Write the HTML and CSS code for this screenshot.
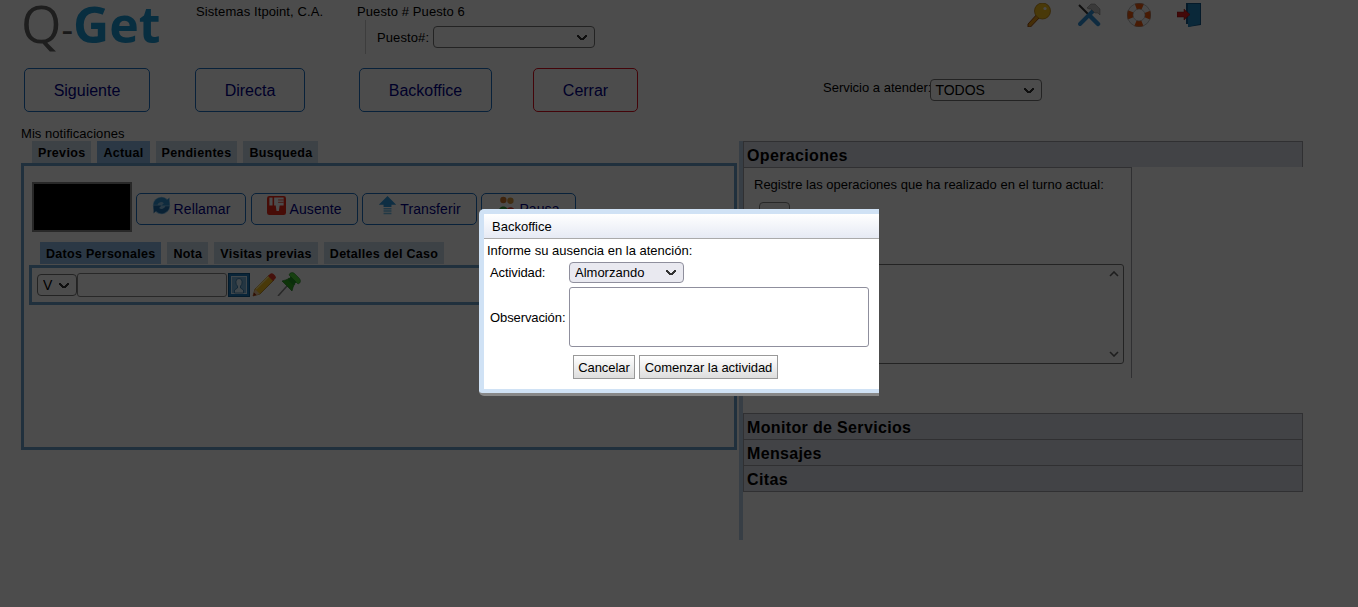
FILE: index.html
```html
<!DOCTYPE html>
<html lang="es">
<head>
    <meta charset="UTF-8">
    <meta name="viewport" content="width=device-width, initial-scale=1.0">
    <title>Q-Get</title>
    <link rel="stylesheet" href="styles.css">
</head>
<body>
    <header class="top">
        <div class="logo"><span class="logo-q">Q</span><span class="logo-dash">-</span><span class="logo-get">Get</span></div>
        <div class="company">Sistemas Itpoint, C.A.</div>
        <div class="station">
            <div>Puesto # Puesto 6</div>
            <div class="station-pick">
                <label>Puesto#:</label>
                <select class="station-select"><option></option></select>
            </div>
        </div>
        <nav class="top-icons">
            <svg class="top-icon" viewBox="0 0 24 24"><path d="M1 21l11-12 3 3L3.500 24H1z" fill="#e89a18" stroke="#9a4a10" stroke-width="1"/><circle cx="15.500" cy="8" r="8" fill="#f4c020" stroke="#b88010" stroke-width=".8"/><circle cx="18" cy="5.500" r="1.600" fill="#f4f4f4"/></svg>
            <svg class="top-icon" viewBox="0 0 24 24"><path d="M2 2l11 11" stroke="#333" stroke-width="2"/><path d="M13 13l8 8" stroke="#2f90d8" stroke-width="4.500" stroke-linecap="round"/><path d="M3 21L16 8" stroke="#2f90d8" stroke-width="4" stroke-linecap="round"/><path d="M10 5l4-4h4l5 5v6l-2-2-3 0-4-4-2 0z" fill="#c4c4c4" stroke="#777" stroke-width=".5"/></svg>
            <svg class="top-icon" viewBox="0 0 24 24"><circle cx="12" cy="12" r="9" fill="none" stroke="#f4f4f4" stroke-width="6"/><circle cx="12" cy="12" r="9" fill="none" stroke="#f05a10" stroke-width="6" stroke-dasharray="7.070 7.070" stroke-dashoffset="3.535"/><circle cx="12" cy="12" r="11.700" fill="none" stroke="#999" stroke-width=".6"/><circle cx="12" cy="12" r="6" fill="none" stroke="#999" stroke-width=".6"/></svg>
            <svg class="top-icon" viewBox="0 0 24 24"><path d="M9 0h15v22l-13 2V21H9z" fill="#12598a"/><path d="M11 1h12v20l-12 3z" fill="#2486c0"/><path d="M0 9h7V6l6 5.500-6 5.500v-3H0z" fill="#e02020" stroke="#801010" stroke-width=".5"/></svg>
        </nav>
    </header>

    <section class="actions">
        <button class="action-btn btn-next">Siguiente</button>
        <button class="action-btn btn-direct">Directa</button>
        <button class="action-btn btn-back">Backoffice</button>
        <button class="action-btn btn-close">Cerrar</button>
        <div class="service">
            <label>Servicio a atender:</label>
            <select class="service-select"><option>TODOS</option></select>
        </div>
    </section>

    <main class="work">
        <section class="left">
            <div class="notes-label">Mis notificaciones</div>
            <ul class="tabs tabs-main">
                <li>Previos</li>
                <li class="active">Actual</li>
                <li>Pendientes</li>
                <li>Busqueda</li>
            </ul>
            <div class="tab-panel">
                <div class="call-row">
                    <div class="ticket"></div>
                    <div class="call-btns">
                        <button class="call-btn call-redial">
                            <svg class="call-icon" viewBox="0 0 24 24"><circle cx="12" cy="12" r="11" fill="#8cc6ec"/><path d="M2 11a10 10 0 0 1 17-6l3-3v10H12l3-3a5 5 0 0 0-8 2z" fill="#2f8fd0"/><path d="M22 13a10 10 0 0 1-17 6l-3 3V12h10l-3 3a5 5 0 0 0 8-2z" fill="#1f70b0"/></svg>
                            Rellamar
                        </button>
                        <button class="call-btn call-away">
                            <svg class="call-icon" viewBox="0 0 24 24"><rect width="24" height="24" rx="3" fill="#ee2a18"/><path d="M9 2h12v10h-5l-1 7h-3l-1-7H9z" fill="#fff"/><path d="M3 2h4v10H3z" fill="#fff"/><path d="M14 5h7M14 8h7" stroke="#ee2a18"/></svg>
                            Ausente
                        </button>
                        <button class="call-btn call-transfer">
                            <svg class="call-icon" viewBox="0 0 24 24"><path d="M12 0l11 11h-6v3H7v-3H1z" fill="#2f9ae0"/><path d="M7 15h10v2H7zM7 18h10v2H7zM7 21h10v2H7z" fill="#6fbce8"/></svg>
                            Transferir
                        </button>
                        <button class="call-btn call-pause">
                            <svg class="call-icon" viewBox="0 0 24 24"><circle cx="8" cy="5" r="4" fill="#d07a30"/><circle cx="17" cy="6" r="4" fill="#d89a40"/><path d="M2 20c0-9 12-9 12 0z" fill="#3aa040"/><path d="M11 21c0-9 12-9 12 0z" fill="#e04030"/></svg>
                            Pausa
                        </button>
                    </div>
                </div>
                <ul class="tabs tabs-inner">
                    <li class="active">Datos Personales</li>
                    <li>Nota</li>
                    <li>Visitas previas</li>
                    <li>Detalles del Caso</li>
                </ul>
                <div class="inner-panel">
                    <select class="doc-type"><option>V</option></select>
                    <input class="doc-number" type="text">
                    <svg class="photo-btn" viewBox="0 0 22 24"><rect x=".5" y=".5" width="21" height="23" fill="#1f7cc0" stroke="#0f5a90"/><rect x="3.500" y="3.500" width="15" height="17" fill="#78b4dc" stroke="#d8eefa"/><path d="M6.500 20v-3l3-2v-2a4 4 0 0 1-1.500-3V8.500a3 3 0 0 1 6 0V10a4 4 0 0 1-1.500 3v2l3 2v3z" fill="#d8eefa" stroke="#1f6aa0" stroke-width=".7"/></svg>
                    <svg class="tool-icon pencil-icon" viewBox="0 0 24 24"><path d="M1 23l2-7L17 2l5 5L8 21z" fill="#f4c020" stroke="#a06a10" stroke-width=".7"/><path d="M4 16L18 2" stroke="#ffe88a" stroke-width="1.500"/><path d="M16 3l2-2a2.500 2.500 0 0 1 3.500 0l1.500 1.500a2.500 2.500 0 0 1 0 3.500l-2 2z" fill="#e83a28"/><path d="M1 23l2-7 5 5z" fill="#f0c898"/><path d="M1 23l1-3.500 2.500 2.500z" fill="#a02a10"/></svg>
                    <svg class="tool-icon pin-icon" viewBox="0 0 24 24"><path d="M1 24l9-10" stroke="#888" stroke-width="1.600"/><path d="M5 9c3-1 5-1 7-3l6 6c-2 2-2 4-3 7z" fill="#2fb020" stroke="#15701a" stroke-width=".6"/><path d="M11 8l3-4 6 6-4 3z" fill="#1f9a20"/><path d="M12 3c1-3 4-3 6-1l4 4c2 2 2 5-1 6z" fill="#4fd838" stroke="#15701a" stroke-width=".5"/></svg>
                </div>
            </div>
        </section>

        <div class="splitter"></div>

        <section class="right">
            <h3 class="acc-head acc-open">Operaciones</h3>
            <div class="acc-body">
                <p class="acc-text">Registre las operaciones que ha realizado en el turno actual:</p>
                <button class="small-btn"></button>
                <div class="ops-list">
                    <svg class="arrow" viewBox="0 0 10 6"><path d="M1 5l4-4 4 4" fill="none" stroke="#666" stroke-width="1.600"/></svg>
                    <svg class="arrow arrow-down" viewBox="0 0 10 6"><path d="M1 1l4 4 4-4" fill="none" stroke="#666" stroke-width="1.600"/></svg>
                </div>
            </div>
            <div class="acc-rest">
                <h3 class="acc-head">Monitor de Servicios</h3>
                <h3 class="acc-head">Mensajes</h3>
                <h3 class="acc-head">Citas</h3>
            </div>
        </section>
    </main>

    <div class="overlay"></div>

    <div class="dialog">
        <div class="dialog-title">Backoffice</div>
        <div class="dialog-body">
            <p class="dialog-intro">Informe su ausencia en la atención:</p>
            <div class="dialog-form">
                <label>Actividad:</label>
                <select class="activity"><option>Almorzando</option></select>
                <label>Observación:</label>
                <textarea class="observation"></textarea>
            </div>
            <div class="dialog-btns">
                <button class="dialog-btn btn-cancel">Cancelar</button>
                <button class="dialog-btn btn-start">Comenzar la actividad</button>
            </div>
        </div>
    </div>
</body>
</html>
```
FILE: styles.css
```css
* {
    box-sizing: border-box;
}

body {
    font-family: "Liberation Sans", Arial, sans-serif;
    font-size: 12px;
    margin: 0;
    height: 607px;
    overflow: hidden;
    background: #fff;
    color: #000;
}

/* the chevron is two small diagonal stripes */
select {
    appearance: none;
    padding: 0 0 0 4px;
    border: 1px solid #767676;
    border-radius: 4px;
    background-color: #fff;
    background-image: linear-gradient(45deg, transparent 37%, #333 37%, #333 63%, transparent 63%),
        linear-gradient(-45deg, transparent 37%, #333 37%, #333 63%, transparent 63%);
    background-position: right 12px center, right 7px center;
    background-size: 5px 5px;
    background-repeat: no-repeat;
    font-family: inherit;
}

/* header */
.top {
    display: flex;
    height: 68px;
    padding-left: 21px;
}

.logo {
    width: 175px;
    font-family: "Open Sans", sans-serif;
    font-size: 52px;
    line-height: 46px;
    white-space: nowrap;
    color: #666;
}

.logo-dash {
    font-size: 36px;
    color: #555;
}

.logo-get {
    font-size: 50px;
    font-weight: 700;
    color: #1d9ad6;
}

.company {
    width: 161px;
    padding-top: 4px;
    font-size: 13px;
    letter-spacing: .1px;
}

.station {
    padding-top: 4px;
    font-size: 13px;
    letter-spacing: .1px;
}

.station-pick {
    display: flex;
    align-items: center;
    gap: 4px;
    margin: 1px 0 0 8px;
    padding: 6px 0 6px 11px;
    border-left: 1px solid #ccc;
}

.station-select {
    width: 162px;
    height: 22px;
}

.top-icons {
    display: flex;
    gap: 26px;
    margin-left: 432px;
    padding-top: 3px;
}

.top-icon {
    width: 24px;
    height: 24px;
}

/* big action buttons */
.actions {
    display: flex;
    align-items: flex-start;
    height: 58px;
    padding-left: 24px;
}

.action-btn {
    height: 44px;
    padding-top: 3px;
    background: #fff;
    border: 1px solid #1b6ec2;
    border-radius: 5px;
    color: #00008b;
    font-family: inherit;
    font-size: 16px;
}

.btn-next { width: 126px; }
.btn-direct { width: 110px; margin-left: 45px; }
.btn-back { width: 133px; margin-left: 54px; }
.btn-close { width: 105px; margin-left: 41px; border-color: #e01020; }

.service {
    display: flex;
    align-items: center;
    margin: 11px 0 0 185px;
    font-size: 13px;
}

.service label {
    margin-right: -1px;
    margin-bottom: 5px;
}

.service-select {
    width: 112px;
    height: 22px;
    font-size: 14px;
}

/* main columns */
.work {
    display: flex;
    padding-left: 21px;
}

.left {
    width: 716px;
    margin-top: 1px;
}

.notes-label {
    height: 14px;
    font-size: 13px;
    line-height: 14px;
    letter-spacing: .05px;
}

.tabs {
    display: flex;
    gap: 6px;
    list-style: none;
    margin: 0;
    padding: 0;
    font-weight: 700;
    font-size: 12.500px;
}

.tabs li {
    height: 22px;
    padding: 0 6px;
    background: #cddcec;
    line-height: 24px;
    letter-spacing: .28px;
}

.tabs .active {
    background: #8fbce6;
}

.tabs-main {
    padding-left: 11px;
}

.tabs-main li {
    letter-spacing: .32px;
}

.tab-panel {
    height: 287px;
    padding: 16px 8px 0 8px;
    border: 3px solid #6ca0cc;
}

.call-row {
    display: flex;
    align-items: center;
    gap: 4px;
}

.ticket {
    width: 100px;
    height: 50px;
    background: #000;
    border: 2px solid #888;
}

.call-btns {
    display: flex;
    gap: 4px;
    margin-top: 4px;
}

.call-btn {
    display: flex;
    align-items: center;
    justify-content: center;
    gap: 3px;
    height: 32px;
    padding: 0;
    background: #fff;
    border: 1px solid #1b6ec2;
    border-radius: 5px;
    color: #00008b;
    font-family: inherit;
    font-size: 14px;
    letter-spacing: .1px;
}

.call-redial { width: 110px; margin-right: 1px; }
.call-away { width: 107px; }
.call-transfer { width: 115px; }
.call-pause { width: 95px; }

.call-icon {
    width: 19px;
    height: 19px;
    margin-top: -7px;
}

.tabs-inner {
    margin-top: 10px;
    padding-left: 8px;
}

.inner-panel {
    display: flex;
    align-items: center;
    height: 40px;
    margin: 1px 0 0 -3px;
    padding: 0 0 0 5px;
    border: 3px solid #6ca0cc;
}

.doc-type {
    width: 40px;
    height: 22px;
    padding-left: 5px;
    font-size: 14px;
}

.doc-number {
    width: 150px;
    height: 24px;
    border: 1px solid #888;
    border-radius: 3px;
}

.photo-btn {
    width: 22px;
    height: 24px;
    margin-left: 1px;
}

.tool-icon {
    width: 24px;
    height: 24px;
    margin-left: 1px;
}

.pencil-icon {
    margin-left: 2px;
}

.pin-icon {
    margin-top: -2px;
}

.splitter {
    width: 4px;
    height: 399px;
    margin: 15px 0 0 2px;
    background: #b8d0e6;
}

.right {
    width: 560px;
    margin-top: 15px;
}

.acc-head {
    height: 27px;
    margin: 0;
    padding-left: 3px;
    background: #dcdfea;
    border: 1px solid #a0a0a8;
    font-size: 16px;
    line-height: 27px;
    letter-spacing: .35px;
}

.acc-open {
    height: 26px;
    border-bottom: 0;
}

.acc-rest .acc-head + .acc-head {
    margin-top: -1px;
}

.acc-body {
    width: 389px;
    height: 211px;
    padding: 9px 7px 0 10px;
    border: 1px solid #a0a0a8;
    border-bottom: 0;
}

.acc-text {
    margin: 0;
    font-size: 13px;
}

.small-btn {
    display: block;
    width: 31px;
    height: 26px;
    margin: 10px 0 0 5px;
    background: #f0f0f0;
    border: 1px solid #888;
    border-radius: 4px;
}

.ops-list {
    position: relative;
    height: 100px;
    margin: 36px 0 0 5px;
    background: #fff;
    border: 1px solid #777;
    border-radius: 3px;
}

.arrow {
    position: absolute;
    right: 4px;
    top: 6px;
    width: 10px;
    height: 6px;
}

.arrow-down {
    top: auto;
    bottom: 6px;
}

.acc-rest {
    margin-top: 35px;
}

/* modal */
.overlay {
    position: fixed;
    inset: 0;
    background: rgba(0, 0, 0, .7);
}

.dialog {
    position: fixed;
    left: 479px;
    top: 209px;
    width: 400px;
    height: 187px;
    padding: 5px 0 4px 5px;
    background: #d0e2f5;
    border-bottom: 3px solid #888;
    border-radius: 5px 0 0 5px;
    overflow: hidden;
}

.dialog-title {
    height: 25px;
    padding-left: 8px;
    background: linear-gradient(#fff, #e6eaf4);
    border-bottom: 1px solid #aaa;
    font-size: 13px;
    line-height: 25px;
}

.dialog-body {
    height: 150px;
    padding: 4px 0 0 3px;
    background: #fff;
    font-size: 13px;
}

.dialog-intro {
    margin: 0;
    line-height: 15px;
}

.dialog-form {
    display: grid;
    grid-template-columns: 79px 300px;
    grid-template-rows: 21px 60px;
    row-gap: 4px;
    align-items: center;
    margin: 4px 0 0 3px;
}

.dialog-form label {
    letter-spacing: -.1px;
}

.activity {
    width: 115px;
    height: 21px;
    padding-left: 5px;
    background-color: #e9e9f0;
    border-color: #8f8f9d;
    font-size: 13px;
}

.observation {
    width: 300px;
    height: 60px;
    border: 1px solid #8f8f9d;
    border-radius: 3px;
    resize: none;
}

.dialog-btns {
    display: flex;
    gap: 4px;
    margin: 8px 0 0 86px;
}

.dialog-btn {
    height: 24px;
    padding: 0;
    background: linear-gradient(#fff, #ddd);
    border: 1px solid #999;
    font-family: inherit;
    font-size: 13px;
    letter-spacing: -.05px;
}

.btn-cancel { width: 62px; }
.btn-start { width: 139px; }
```
